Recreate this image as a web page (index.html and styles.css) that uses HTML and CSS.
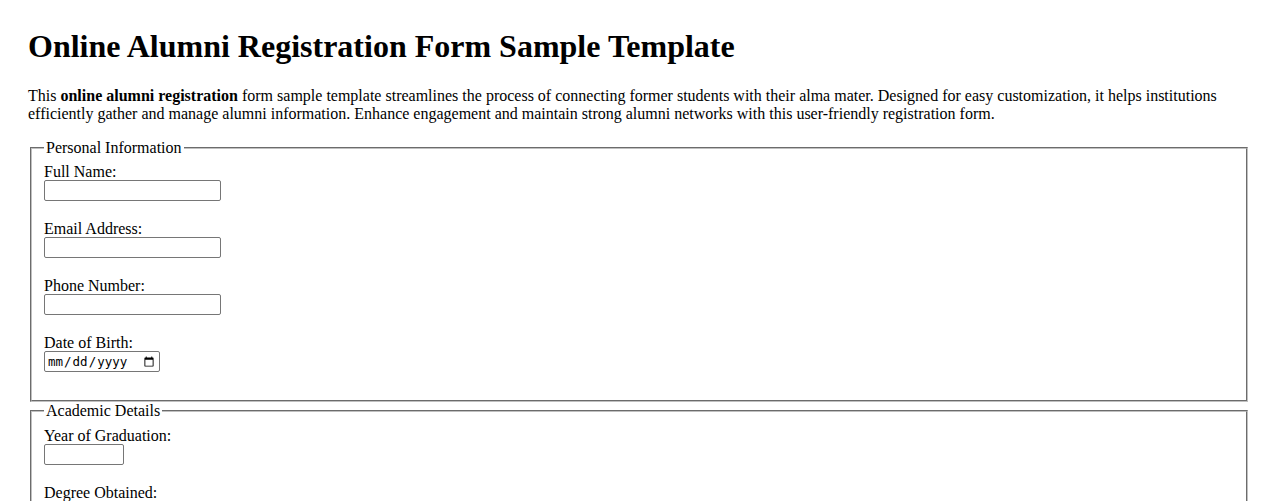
FILE: index.html
```html
<!DOCTYPE html>
<html lang="en">
<head>
<meta charset="utf-8">
<title>Online Alumni Registration Form Sample Template</title>
<link rel="stylesheet" href="styles.css">
</head>
<body>
<div class="page">
  <h1 class="title">Online Alumni Registration Form Sample Template</h1>
  <p class="intro">This <strong>online alumni registration</strong> form sample template streamlines the process of connecting former students with their alma mater. Designed for easy customization, it helps institutions efficiently gather and manage alumni information. Enhance engagement and maintain strong alumni networks with this user-friendly registration form.</p>
  <form class="form">
    <fieldset class="section">
      <legend class="section-title">Personal Information</legend>
      <div class="field">
        <label class="field-label" for="fullname">Full Name:</label>
        <input class="text-input" type="text" id="fullname" name="fullname">
      </div>
      <div class="field">
        <label class="field-label" for="email">Email Address:</label>
        <input class="text-input" type="email" id="email" name="email">
      </div>
      <div class="field">
        <label class="field-label" for="phone">Phone Number:</label>
        <input class="text-input" type="tel" id="phone" name="phone">
      </div>
      <div class="field">
        <label class="field-label" for="dob">Date of Birth:</label>
        <input class="date-input" type="date" id="dob" name="dob">
      </div>
    </fieldset>
    <fieldset class="section">
      <legend class="section-title">Academic Details</legend>
      <div class="field">
        <label class="field-label" for="gradyear">Year of Graduation:</label>
        <input class="year-input" type="number" id="gradyear" name="gradyear">
      </div>
      <div class="field">
        <label class="field-label" for="degree">Degree Obtained:</label>
        <input class="text-input" type="text" id="degree" name="degree">
      </div>
      <div class="field">
        <label class="field-label" for="major">Major:</label>
        <input class="text-input" type="text" id="major" name="major">
      </div>
    </fieldset>
  </form>
</div>
</body>
</html>
```

FILE: styles.css
```css
html, body {
  margin: 0;
  padding: 0;
  background: #ffffff;
}

.page {
  padding: 7px 28px 0;
  font-family: "Liberation Serif", "Times New Roman", serif;
  font-size: 16px;
  color: #000000;
}

.title {
  font-size: 32px;
  font-weight: bold;
  margin: 21.44px 0;
  line-height: normal;
}

.intro {
  margin: 16px 0;
  line-height: normal;
}

.form {
  margin: 0;
}

.section {
  margin: 0 2px;
  padding: 6.6px 12px 9px;
  border: 2px groove rgb(192, 192, 192);
}

.section-title {
  padding: 0 2px;
  line-height: normal;
}

.field {
  margin-bottom: 19px;
}

.field-label {
  display: block;
  line-height: 17px;
  height: 17px;
}

.text-input,
.date-input,
.year-input {
  display: block;
  box-sizing: border-box;
  height: 21px;
  margin: 0;
  padding: 1px 2px;
  border: 1px solid #767676;
  border-radius: 2px;
  background: #ffffff;
  font-family: "Liberation Sans", Arial, sans-serif;
  font-size: 13.33px;
}

.text-input {
  width: 177px;
}

.year-input {
  width: 80px;
}

.date-input {
  width: 116px;
  font-family: "DejaVu Sans Mono", "Liberation Mono", monospace;
  font-size: 12.5px;
  color: #000000;
}
```
